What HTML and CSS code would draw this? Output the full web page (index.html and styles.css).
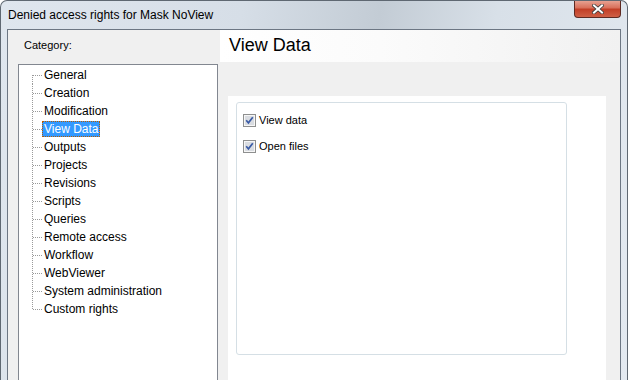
FILE: index.html
```html
<!DOCTYPE html>
<html lang="en">
<head>
    <meta charset="UTF-8">
    <title>Denied access rights for Mask NoView</title>
    <link rel="stylesheet" href="styles.css">
</head>
<body>
    <div class="window">

        <div class="titlebar">
            <span class="title">Denied access rights for Mask NoView</span>
            <button class="close" type="button">
                <svg width="12" height="10" viewBox="0 0 12 10">
                    <path d="M2 1.5 L10 8.5 M10 1.5 L2 8.5" stroke="#3c3c3c" stroke-width="3.6" stroke-linecap="square" fill="none"/>
                    <path d="M2 1.5 L10 8.5 M10 1.5 L2 8.5" stroke="#ffffff" stroke-width="2" stroke-linecap="square" fill="none"/>
                </svg>
            </button>
        </div>

        <div class="client">
            <div class="sidebar">
                <div class="category">Category:</div>
                <ul class="tree">
                    <li><span class="branch"></span><span class="node">General</span></li>
                    <li><span class="branch"></span><span class="node">Creation</span></li>
                    <li><span class="branch"></span><span class="node">Modification</span></li>
                    <li><span class="branch"></span><span class="node -on">View Data</span></li>
                    <li><span class="branch"></span><span class="node">Outputs</span></li>
                    <li><span class="branch"></span><span class="node">Projects</span></li>
                    <li><span class="branch"></span><span class="node">Revisions</span></li>
                    <li><span class="branch"></span><span class="node">Scripts</span></li>
                    <li><span class="branch"></span><span class="node">Queries</span></li>
                    <li><span class="branch"></span><span class="node">Remote access</span></li>
                    <li><span class="branch"></span><span class="node">Workflow</span></li>
                    <li><span class="branch"></span><span class="node">WebViewer</span></li>
                    <li><span class="branch"></span><span class="node">System administration</span></li>
                    <li><span class="branch"></span><span class="node">Custom rights</span></li>
                </ul>
            </div>

            <div class="content">
                <div class="header">View Data</div>
                <div class="panel">
                    <div class="group">
                        <label class="check">
                            <svg width="13" height="13" viewBox="0 0 13 13">
                                <rect x="0.5" y="0.5" width="12" height="12" fill="#f6f6f6" stroke="#8e8f8f"/>
                                <rect x="2" y="2" width="9" height="9" fill="#d9dce1"/>
                                <path d="M3.2 6.3 L5.4 8.8 L9.8 3.2" stroke="#3a5ba6" stroke-width="1.7" fill="none"/>
                            </svg>
                            View data
                        </label>
                        <label class="check">
                            <svg width="13" height="13" viewBox="0 0 13 13">
                                <rect x="0.5" y="0.5" width="12" height="12" fill="#f6f6f6" stroke="#8e8f8f"/>
                                <rect x="2" y="2" width="9" height="9" fill="#d9dce1"/>
                                <path d="M3.2 6.3 L5.4 8.8 L9.8 3.2" stroke="#3a5ba6" stroke-width="1.7" fill="none"/>
                            </svg>
                            Open files
                        </label>
                    </div>
                </div>
            </div>
        </div>

    </div>
</body>
</html>
```

FILE: styles.css
```css
*{
  box-sizing: border-box;
}
body{
  margin: 0;
  font-family: "Liberation Sans", Arial, sans-serif;
  color: #000;
}
div.window{
  width: 628px;
  height: 380px;
  overflow: hidden;
  display: flex;
  flex-direction: column;
  padding: 0 6px;
  border: 1px solid #5f6872;
  border-bottom: 0;
  border-radius: 7px 7px 0 0;
  background: linear-gradient(100deg, #dfe6ee 0%, #d6dee7 35%, #c3ccd5 55%, #d8e0e8 72%, #e3e9f0 100%);
}

/* title bar */
div.titlebar{
  height: 28px;
  flex-shrink: 0;
  display: flex;
  justify-content: space-between;
  align-items: flex-start;
}
span.title{
  padding: 6px 0 0 1px;
  font-size: 12px;
  line-height: 16px;
}
button.close{
  width: 47px;
  height: 18px;
  margin-top: -1px;
  padding: 0;
  display: flex;
  align-items: center;
  justify-content: center;
  border: 1px solid #5e2a22;
  border-top: 0;
  border-radius: 0 0 4px 4px;
  background: linear-gradient(#e9a899 0%, #d9715c 45%, #c23f27 55%, #cf5f45 100%);
}

/* client area */
div.client{
  flex-grow: 1;
  display: flex;
  border: 1px solid #6c7683;
  border-bottom: 0;
  background-color: #f0f0f0;
}
div.sidebar{
  flex-basis: 212px;
  flex-shrink: 0;
  display: flex;
  flex-direction: column;
}
div.category{
  padding: 8px 0 0 16px;
  font-size: 11px;
  line-height: 14px;
  height: 34px;
}
ul.tree{
  flex-grow: 1;
  list-style: none;
  margin: 0 0 0 10px;
  padding: 1px 0 0 0;
  width: 200px;
  border: 1px solid #828790;
  border-bottom: 0;
  background-color: #fff;
  font-size: 12px;
}
ul.tree li{
  height: 18px;
  display: flex;
  align-items: center;
  background-image: repeating-linear-gradient(to bottom, #9a9a9a 0 1px, transparent 1px 2px);
  background-repeat: no-repeat;
  background-size: 1px 100%;
  background-position: 13px 0;
}
ul.tree li:first-child{
  background-size: 1px 9px;
  background-position: 13px 9px;
}
ul.tree li:last-child{
  background-size: 1px 10px;
  background-position: 13px 0;
}
span.branch{
  width: 9px;
  margin-left: 14px;
  border-top: 1px dotted #9a9a9a;
}
span.node{
  padding: 0 1px;
  border: 1px solid transparent;
  line-height: 14px;
  white-space: nowrap;
}
span.node.-on{
  background-color: #3399ff;
  color: #fff;
  border: 1px dotted #b85c00;
}

/* right side */
div.content{
  flex-grow: 1;
  display: flex;
  flex-direction: column;
}
div.header{
  height: 32px;
  flex-shrink: 0;
  padding-left: 9px;
  font-size: 18px;
  line-height: 31px;
  background: linear-gradient(to right, #ffffff 0%, #fbfbfb 40%, #f1f1f1 100%);
}
div.panel{
  flex-grow: 1;
  margin: 34px 14px 0 8px;
  padding: 6px 0 0 8px;
  background-color: #fff;
}
div.group{
  width: 331px;
  height: 253px;
  padding: 9px 0 0 6px;
  border: 1px solid #d5dfe5;
  border-radius: 3px;
  display: flex;
  flex-direction: column;
  gap: 10px;
}
label.check{
  height: 16px;
  display: flex;
  align-items: center;
  gap: 3px;
  font-size: 11px;
}
```
